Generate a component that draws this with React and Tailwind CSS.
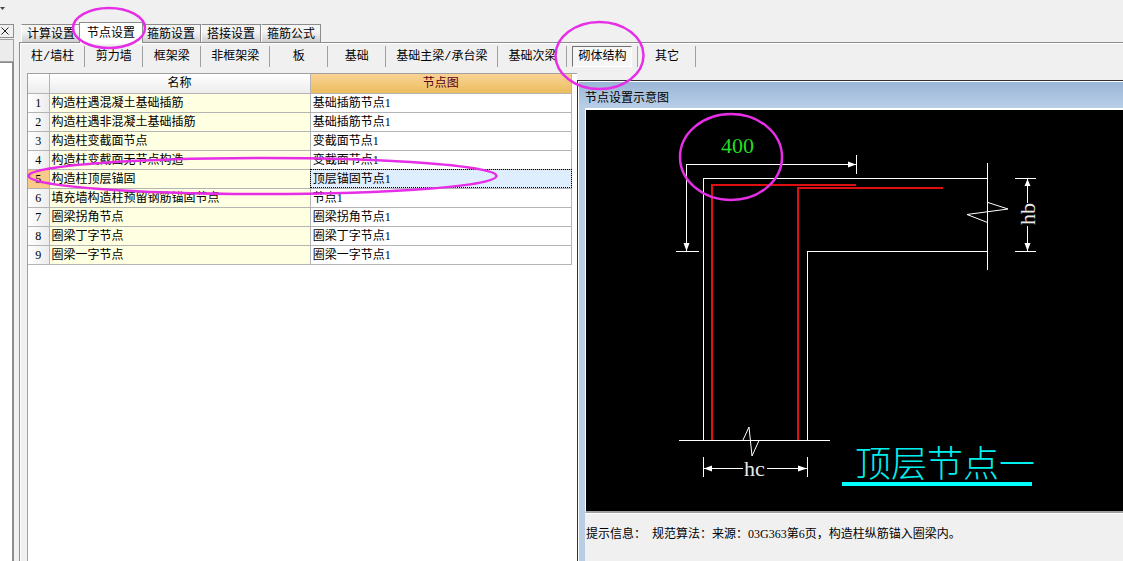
import { useState } from "react";

const TABS = ["计算设置", "节点设置", "箍筋设置", "搭接设置", "箍筋公式"];

const CATEGORIES = [
  "柱/墙柱",
  "剪力墙",
  "框架梁",
  "非框架梁",
  "板",
  "基础",
  "基础主梁/承台梁",
  "基础次梁",
  "砌体结构",
  "其它",
];

const ROWS = [
  { name: "构造柱遇混凝土基础插筋", node: "基础插筋节点1" },
  { name: "构造柱遇非混凝土基础插筋", node: "基础插筋节点1" },
  { name: "构造柱变截面节点", node: "变截面节点1" },
  { name: "构造柱变截面无节点构造", node: "变截面节点1" },
  { name: "构造柱顶层锚固", node: "顶层锚固节点1" },
  { name: "填充墙构造柱预留钢筋锚固节点", node: "节点1" },
  { name: "圈梁拐角节点", node: "圈梁拐角节点1" },
  { name: "圈梁丁字节点", node: "圈梁丁字节点1" },
  { name: "圈梁一字节点", node: "圈梁一字节点1" },
];

// Edge of the docked panel on the left; only its right side is visible.
const DockedPanel = () => (
  <aside className="flex w-[14px] shrink-0 flex-col">
    <div className="h-6 pt-[7px]">
      <svg className="h-[3px] w-[5px]" viewBox="0 0 5 3">
        <path d="M0 0h5L2.500 3z" fill="#444" />
      </svg>
    </div>
    <button
      type="button"
      aria-label="关闭"
      className="flex h-[14px] w-full items-center border border-l-0 border-[#8c8c8c]"
    >
      <svg className="h-2 w-[9px]" viewBox="0 0 9 8">
        <path d="M1.500 .5l7 7M8.500 .5l-7 7" stroke="#222" fill="none" />
      </svg>
    </button>
    <div className="mt-px h-[23px] border-y border-r border-[#a0a0a0] bg-[#ececec]" />
    <div className="grow border-r-2 border-t border-[#8c8c8c] bg-white" />
  </aside>
);

const TabBar = ({ active, onSelect }) => (
  <div role="tablist" className="flex h-[42px] items-end pl-[2px]">
    {TABS.map((tab) => (
      <button
        key={tab}
        type="button"
        role="tab"
        aria-selected={tab === active}
        onClick={() => onSelect(tab)}
        className={
          tab === active
            ? "relative z-10 -mx-[2px] -mb-px h-[21px] w-[64px] border border-b-0 border-[#8c8c8c] bg-white pb-px leading-[18px]"
            : "h-[18px] w-[60px] border border-b-0 border-l-white border-[#8c8c8c] bg-linear-to-b from-[#f4f4f4] from-40% to-[#cfcfcf] leading-[18px]"
        }
      >
        {tab}
      </button>
    ))}
  </div>
);

const CategoryBar = ({ active, onSelect }) => (
  <nav className="flex h-[29px] items-start pt-[2px] font-['Liberation_Mono','Noto_Sans_CJK_SC',monospace]">
    {CATEGORIES.map((category) => (
      <div key={category} className="flex h-[21px] border-r border-[#a0a0a0]">
        <button
          type="button"
          aria-pressed={category === active}
          onClick={() => onSelect(category)}
          className={
            category === active
              ? "mx-[5px] w-[60px] border border-b-white border-l-[#707070] border-r-white border-t-[#707070] bg-[#f6f6f6] leading-[18px]"
              : "min-w-[57px] px-[10px] leading-5"
          }
        >
          {category}
        </button>
      </div>
    ))}
  </nav>
);

const NodeTable = ({ selected, onSelect }) => (
  <div className="grow border-l border-t border-[#a0a0a0] bg-white pr-[5px]">
    <table className="w-full table-fixed border-collapse">
      <colgroup>
        <col className="w-[21px]" />
        <col />
        <col />
      </colgroup>
      <thead>
        <tr className="h-[19px]">
          <th className="border-b border-r border-[#b4b4b4] bg-linear-to-b from-white to-[#ececec]" />
          <th className="border-b border-r border-[#b4b4b4] bg-linear-to-b from-white to-[#ececec] p-0 font-normal">
            名称
          </th>
          <th className="border-b border-r border-[#b4b4b4] bg-linear-to-b from-[#f9d295] to-[#ebbd5c] p-0 font-normal text-[#5a0018]">
            节点图
          </th>
        </tr>
      </thead>
      <tbody>
        {ROWS.map((row, index) => (
          <tr key={row.name} className="h-[19px]" onClick={() => onSelect(index)}>
            <td
              className={`border-b border-r border-[#b4b4b4] p-0 text-center ${
                index === selected ? "bg-[#fbc98a]" : "bg-linear-to-r from-white to-[#ececec]"
              }`}
            >
              {index + 1}
            </td>
            <td className="border-b border-r border-[#b4b4b4] bg-[#ffffe1] py-0 pl-[2px] pr-0">
              {row.name}
            </td>
            <td
              className={`border-b border-r border-[#b4b4b4] py-0 pl-[2px] pr-0 ${
                index === selected
                  ? "bg-[#dfeeff] outline-1 -outline-offset-1 outline-dotted outline-black"
                  : "bg-white"
              }`}
            >
              {row.node}
            </td>
          </tr>
        ))}
      </tbody>
    </table>
  </div>
);

const NodeDrawing = () => (
  <svg
    viewBox="0 0 537 401"
    className="block w-full bg-black font-['Liberation_Serif','Noto_Sans_CJK_SC',serif]"
    fill="none"
  >
    <g stroke="#fff" shapeRendering="crispEdges">
      {/* anchorage length */}
      <path d="M270.500 54.500H100.500V141.500M270.500 45v19M90 141.500h23" />
      {/* column and beam outline */}
      <path d="M401 68.500H117.500V330M401 141.500H221.500V330" />
      {/* break lines */}
      <path d="M401.500 53v107M93 330.500h151" />
      {/* hb and hc */}
      <path d="M429 68.500h21M429 141.500h21M441.500 69v24M441.500 116v25" />
      <path d="M117.500 347v20M221.500 347v20M118 358.500h39M181 358.500h40" />
    </g>
    <g stroke="#fff">
      <path d="M402 92.500l20 6.500-41 5.500 20.500 8" />
      <path d="M157 330l6-13 3 29 7-15.500" />
    </g>
    <g fill="#fff">
      <path d="M270 54.500l-8-3v6z" />
      <path d="M100.500 141l-3-8h6z" />
      <path d="M441.500 69l-3 7h6z" />
      <path d="M441.500 141l-3-8h6z" />
      <path d="M118 358.500l8-3v6z" />
      <path d="M221 358.500l-9-3v6z" />
    </g>
    <g strokeWidth="2" shapeRendering="crispEdges">
      <path d="M270 75H126V330" stroke="#e01010" />
      <path d="M357 78H212V330" stroke="#e01010" />
    </g>
    <text x="135" y="43" fontSize="22" fill="#22dd22">
      400
    </text>
    <text x="158" y="366" fontSize="22" fill="#e8e8e8">
      hc
    </text>
    <text transform="translate(449 115) rotate(-90)" fontSize="22" fill="#e8e8e8">
      hb
    </text>
    <text x="269" y="367" fontSize="36" fontWeight="300" fill="#00f0f0">
      顶层节点一
    </text>
    <path d="M256 374h190" stroke="#00ffff" strokeWidth="4" />
  </svg>
);

const PreviewWindow = () => (
  <section className="mt-[7px] flex min-w-0 flex-col border-l border-t border-[#303038]">
    <div className="flex grow flex-col border-l border-t border-white">
      <h2 className="h-[26px] bg-linear-to-b from-[#9ab6d6] to-[#b9cfe8] pl-[6px] pt-[6px] leading-5">
        节点设置示意图
      </h2>
      <div className="flex grow flex-col border-l-[6px] border-[#b9cde5]">
        <div className="border-b-2 border-l border-t-2 border-b-[#a0a0a0] border-l-white border-t-white">
          <NodeDrawing />
        </div>
        <p className="grow border-t border-white pl-px pt-[10px] leading-5">
          提示信息：&nbsp; 规范算法：来源：03G363第6页，构造柱纵筋锚入圈梁内。
        </p>
      </div>
    </div>
  </section>
);

// Pen marks drawn over the settings that matter.
const PenMarks = () => (
  <svg
    className="pointer-events-none absolute left-0 top-0 z-20 h-full w-full"
    fill="none"
    stroke="#e62ee6"
    strokeWidth="2.500"
  >
    <ellipse cx="109" cy="28" rx="36" ry="20" />
    <ellipse cx="599.500" cy="55.500" rx="44" ry="33.500" />
    <ellipse cx="262.500" cy="176" rx="234" ry="18" />
    <ellipse cx="731" cy="157" rx="51" ry="43" />
  </svg>
);

const App = () => {
  const [tab, setTab] = useState("节点设置");
  const [category, setCategory] = useState("砌体结构");
  const [selected, setSelected] = useState(4);

  return (
    <div className="relative flex min-h-screen overflow-hidden bg-[#f0f0f0] font-['Liberation_Serif','Noto_Sans_CJK_SC',serif] text-[12px] leading-[18px] text-black">
      <DockedPanel />
      <main className="ml-[5px] flex min-w-0 grow flex-col">
        <TabBar active={tab} onSelect={setTab} />
        <div className="flex grow flex-col border-l border-t border-[#8c8c8c]">
          <div className="flex grow flex-col border-l border-t border-white">
            <CategoryBar active={category} onSelect={setCategory} />
            <div className="grid grow grid-cols-[556fr_546fr]">
              <div className="flex min-w-0 flex-col pl-[6px]">
                <NodeTable selected={selected} onSelect={setSelected} />
              </div>
              <PreviewWindow />
            </div>
          </div>
        </div>
      </main>
      <PenMarks />
    </div>
  );
};

export default App;
